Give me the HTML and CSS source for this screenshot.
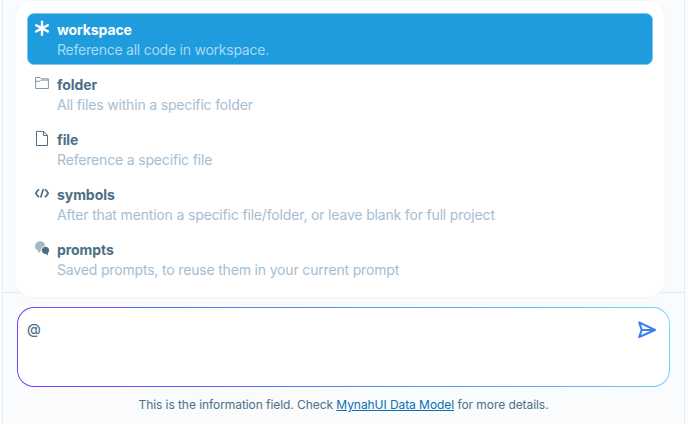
FILE: index.html
```html
<!DOCTYPE html>
<html lang="en">
<head>
<meta charset="utf-8">
<title>Chat prompt</title>
<link rel="stylesheet" href="styles.css">
</head>
<body>
<main class="chat">
  <section class="history"></section>
  <section class="composer">
    <div class="prompt">
      <span class="prompt-text">@</span>
      <svg class="send" viewBox="0 0 20 20"><path d="M2.2 2.4 18 10 2.2 17 4.7 10ZM4.7 10H17"/></svg>
    </div>
    <p class="info">This is the information field. Check <a href="#">MynahUI Data Model</a> for more details.</p>
  </section>
  <div class="picker">
    <div class="item selected">
      <svg class="icon" viewBox="0 0 14 14"><path class="star" d="M7-.2V14.8M.3 3.7 13.7 10.9M.3 10.9 13.7 3.7"/></svg>
      <div class="copy"><b>workspace</b><span>Reference all code in workspace.</span></div>
    </div>
    <div class="item">
      <svg class="icon folder" viewBox="0 0 14 14"><path d="M.6 12.5V1.5H5L6.2 2.8H13.4V12.5ZM.7 5.3H5L6.2 4.1H13.3"/></svg>
      <div class="copy"><b>folder</b><span>All files within a specific folder</span></div>
    </div>
    <div class="item">
      <svg class="icon file" viewBox="0 0 14 14"><path d="M1.5.4H8.6L12.5 4.4V14.5H1.5ZM8.5.4V4.5H12.5"/></svg>
      <div class="copy"><b>file</b><span>Reference a specific file</span></div>
    </div>
    <div class="item">
      <svg class="icon code" viewBox="0 0 14 14"><path d="M4.2 3.4 2.7 4.4 .8 7.2 2.7 10 4.2 11M9.8 3.4 11.3 4.4 13.2 7.2 11.3 10 9.8 11M8.3 3 5.7 11.4"/></svg>
      <div class="copy"><b>symbols</b><span>After that mention a specific file/folder, or leave blank for full project</span></div>
    </div>
    <div class="item">
      <svg class="icon chat-icon" viewBox="0 0 14 14"><path class="back" d="M5 .3C8 .3 10.2 2.3 10.2 5 7.7 5.2 6.2 6.6 6.2 8.8Q6.2 9.8 5.7 10L3.2 12.4V9.7C1.3 9 0 7.4 0 5.2 0 2.5 2.2.3 5 .3Z"/><path class="front" d="M10.5 5.8C12.7 5.8 14.2 7.4 14.2 9.3Q14.2 11 12.9 12V14.4L11 13C8.5 13.1 6.8 11.5 6.8 9.3 6.8 7.5 8.4 5.8 10.5 5.8Z"/></svg>
      <div class="copy"><b>prompts</b><span>Saved prompts, to reuse them in your current prompt</span></div>
    </div>
  </div>
</main>
</body>
</html>
```
FILE: styles.css
```css
* { box-sizing: border-box; }
body {
  margin: 0;
  height: 424px;
  overflow: hidden;
  background: #fafcfe;
  color: #4d6f85;
  font-family: Inter, "Liberation Sans", sans-serif;
}
.chat {
  position: relative;
  display: flex;
  flex-direction: column;
  width: 683px;
  height: 424px;
  margin-left: 2px;
  border: solid #e4ebf1;
  border-width: 0 1px;
  background: #f9fbfd;
}
.history { height: 292px; }
.composer {
  flex: 1;
  padding: 14px 14px 0;
  border-top: 1px solid #e5eaef;
}
.prompt {
  display: flex;
  justify-content: space-between;
  width: 653px;
  height: 80px;
  padding: 12px 12px 0 9px;
  border: 1px solid transparent;
  border-radius: 17px;
  background:
    linear-gradient(#fff, #fff) padding-box,
    linear-gradient(45deg, #7a38f0 0%, #4c8cff 50%, #75d8ff 100%) border-box;
}
.prompt-text { font-size: 14px; font-weight: 500; line-height: 18px; }
.send {
  width: 20px;
  height: 20px;
  fill: none;
  stroke: #3981ee;
  stroke-width: 2.1;
  stroke-linejoin: round;
}
.info {
  margin: 10px 0 0;
  width: 653px;
  text-align: center;
  font-size: 12px;
  line-height: 16px;
  letter-spacing: -0.065px;
}
.info a { color: #0971b3; }
.picker {
  position: absolute;
  left: 12px;
  top: 1px;
  width: 650px;
  height: 296px;
  padding: 12px;
  border-radius: 17px;
  background: #fff;
  box-shadow: 0 0 2px #dfe8eeb0;
}
.item {
  display: flex;
  gap: 8px;
  width: 626px;
  height: 52px;
  margin-bottom: 3px;
  padding: 7px 8px;
  border-radius: 7px;
}
.selected {
  padding: 6px 7px;
  border: 1px solid #7fc5eb;
  background: #1f9cdd;
  color: #fff;
}
.icon {
  width: 14px;
  height: 14px;
  margin-top: 1px;
  overflow: visible;
  fill: none;
  stroke: currentColor;
  stroke-width: 1;
}
.star { stroke-width: 2.4; }
.folder { stroke: #8197a5; }
.code { stroke-width: 1.7; stroke-linejoin: round; }
.chat-icon { stroke: none; }
.back { fill: #a7b8c4; }
.front { fill: currentColor; }
.copy { display: flex; flex-direction: column; }
.copy b {
  font-size: 14px;
  font-weight: 700;
  line-height: 20px;
  letter-spacing: -0.06px;
}
.copy span {
  color: #a6bdd1;
  font-size: 14px;
  line-height: 20px;
  letter-spacing: -0.17px;
}
.selected .copy b { letter-spacing: -0.12px; }
.selected .copy span { color: #a9d8f3; letter-spacing: -0.24px; }
```
